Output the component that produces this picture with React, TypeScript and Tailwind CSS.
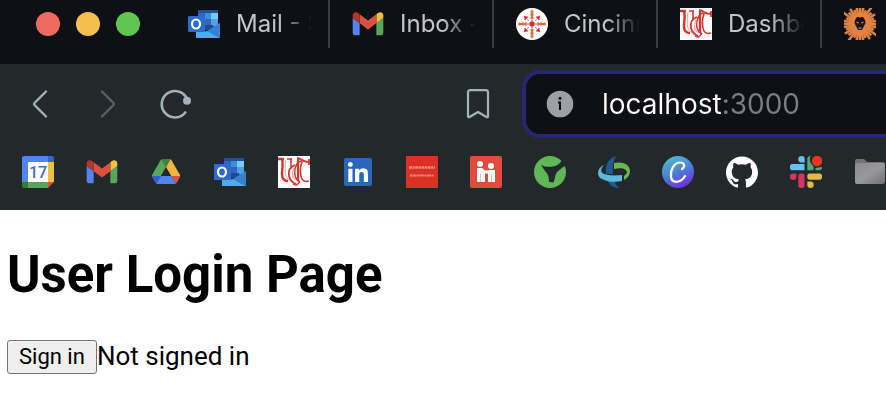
import type { ReactNode } from 'react';
import { FaLinkedin } from 'react-icons/fa';
import { SiGithub } from 'react-icons/si';

function Outlook() {
  return (
    <svg viewBox="0 0 32 32" className="size-8">
      <rect x="10" y="2" width="20" height="20" rx="1" fill="#2b69bd" />
      <path d="M11 2h18a1 1 0 0 1 1 1v2H10V3a1 1 0 0 1 1-1z" fill="#264f99" />
      <path d="M17 5h6v6h-6z" fill="#3a90dc" />
      <path d="M23 5h7v6h-7z" fill="#70ccf8" />
      <path d="M17 11h6v6h-6z" fill="#2f67bd" />
      <path d="M23 11h7v7h-7z" fill="#4ca2e4" />
      <path d="M17 17h8v5h-8z" fill="#204a93" />
      <path d="M8 24l12-1 12-8v14a1 1 0 0 1-1 1H9a1 1 0 0 1-1-1z" fill="#4faae9" />
      <path d="M32 15v14l-1 1-12-7z" fill="#3a80d0" />
      <path d="M8 24h9l14 6H9a1 1 0 0 1-1-1z" fill="#51aaea" />
      <rect y="8" width="17" height="16" rx="1" fill="#2b6bcd" />
      <ellipse cx="8" cy="16" rx="4" ry="4.5" fill="none" stroke="#fff" strokeWidth="2.200" />
    </svg>
  );
}

function Gmail() {
  return (
    <svg viewBox="50 30 92 92" className="size-8">
      <path fill="#5585ec" d="M58 108h14V74L52 59v43c0 3.300 2.700 6 6 6" />
      <path fill="#58a65c" d="M120 108h14c3.300 0 6-2.700 6-6V59l-20 15" />
      <path fill="#f1bf42" d="M120 48v26l20-15v-8c0-7.400-8.500-11.600-14.400-7.200" />
      <path fill="#d95140" d="M72 74V48l24 18 24-18v26L96 92" />
      <path fill="#b5352a" d="M52 51v8l20 15V48l-5.600-4.200C60.500 39.400 52 43.600 52 51" />
    </svg>
  );
}

const CAMPUS_ARMS = [0, 90, 180, 270];

function Campus() {
  return (
    <svg viewBox="0 0 32 32" className="size-8">
      <circle cx="16" cy="16" r="16" fill="#fff" />
      {CAMPUS_ARMS.map((angle) => (
        <g key={angle} transform={`rotate(${angle} 16 16)`}>
          <path d="M16 1l2 3.500h-4zM16 4l2.300 3.500h-4.600zM16 7l2.300 3.500h-4.600z" fill="#dd7a3f" />
          <path d="M16 3v10" stroke="#d9542f" strokeWidth="1" />
          <path d="M8 8l4 1-3 3zM10 10l3 3" fill="#dc3347" stroke="#dc3347" strokeWidth=".6" />
        </g>
      ))}
      <circle cx="16" cy="16" r="2.700" fill="#d8322f" />
    </svg>
  );
}

function Cincinnati() {
  return (
    <svg viewBox="0 0 32 32" className="size-8">
      <path fill="#fff" d="M0 0h32v32H0z" />
      <g fill="none" stroke="#d8342d">
        <path d="M0 3h6M4 3c1.500 5 0 10 0 15 0 5 2 7 6 7" strokeWidth="2.400" />
        <path d="M8 4c-1 6-1 12 0 16 1 3 3 4 5 5" strokeWidth=".8" stroke="#e88d88" />
        <path d="M9 3h5M13 3v8" strokeWidth="1.600" />
        <path d="M17 9c-5 2-7 6-6 11 1 4 4 7 7 8" strokeWidth="1.800" />
        <path d="M16 12c-2 4-2 9 1 12" strokeWidth="1" stroke="#e88d88" />
        <path d="M29 6c-7-3-11 1-12 7-1 6 1 11 5 13" strokeWidth="1.400" />
        <path d="M20 3v22" strokeWidth="2.200" />
        <path d="M24 6c-2 5-2 12 0 17 1 2 4 3 7 2" strokeWidth="1.600" />
        <path d="M19 2c4 0 6 4 12 4M31 3v6" strokeWidth="1.800" />
        <path d="M15 28c3 2 5 1 7-3" strokeWidth="1.400" />
      </g>
    </svg>
  );
}

const RAYS = Array.from({ length: 32 }, (_, i) => ({ angle: i * 11.25, tip: [0, -2, 1, -4][i % 4] }));

function Lion() {
  return (
    <svg viewBox="0 0 32 32" className="size-8">
      <g fill="#e08345">
        {RAYS.map(({ angle, tip }) => (
          <path key={angle} d={`M14.600 8L15 ${tip}h2.400L17.200 8z`} transform={`rotate(${angle} 16 16)`} />
        ))}
        <circle cx="16" cy="16" r="9.500" />
      </g>
      <path d="M11 12l2-3h2l1 1 1-1h2l2 3 .5 3-2 4-1.500 3h-4l-1.500-3-2-4z" fill="#19130f" />
      <path d="M12.500 13.500l2.500 1v1l-2.500-.5zM19.500 13.500l-2.500 1v1l2.500-.5zM14 19.500h4l-1 1.200h-2z" fill="#d97c41" />
    </svg>
  );
}

function Calendar() {
  return (
    <svg viewBox="0 0 32 32" className="size-8">
      <path d="M2 0h24v6H6v20H0V2a2 2 0 0 1 2-2z" fill="#5086ec" />
      <path d="M26 0h4a2 2 0 0 1 2 2v4h-6z" fill="#2f66d0" />
      <path d="M26 6h6v20h-6z" fill="#f1bf42" />
      <path d="M6 26h20v6H6z" fill="#58a65c" />
      <path d="M0 26h6v6H2a2 2 0 0 1-2-2z" fill="#34783c" />
      <path d="M26 26h6l-6 6z" fill="#d95140" />
      <path d="M6 6h20v20H6z" fill="#fff" />
      <text x="16" y="22" textAnchor="middle" fontSize="16" fontWeight="500" fill="#3b6fd4" className="font-['Roboto',sans-serif]">17</text>
    </svg>
  );
}

function Drive() {
  return (
    <svg viewBox="-6 -9 99 99" className="size-8">
      <path d="M6.600 66.850l3.850 6.650c.8 1.400 1.950 2.500 3.300 3.300L27.500 53H0c0 1.550.4 3.100 1.200 4.500z" fill="#2d63d0" />
      <path d="M43.650 25L29.900 1.200c-1.350.8-2.500 1.900-3.300 3.300l-25.400 44A9.060 9.060 0 0 0 0 53h27.500z" fill="#58a65c" />
      <path d="M73.550 76.800c1.350-.8 2.500-1.900 3.300-3.300L86.100 57.500c.8-1.400 1.200-2.950 1.200-4.500H59.800l5.850 11.500z" fill="#d95140" />
      <path d="M43.650 25L57.400 1.200C56.050.4 54.500 0 52.900 0H34.400c-1.600 0-3.150.45-4.500 1.200z" fill="#3c8343" />
      <path d="M59.800 53H27.500L13.750 76.800c1.350.8 2.900 1.200 4.500 1.200h50.800c1.600 0 3.150-.45 4.500-1.200z" fill="#5086ec" />
      <path d="M73.400 26.500L60.700 4.500c-.8-1.400-1.950-2.500-3.300-3.300L43.650 25l16.150 28h27.450c0-1.550-.4-3.100-1.200-4.500z" fill="#f0b541" />
    </svg>
  );
}

function LinkedIn() {
  return (
    <span className="grid size-8 place-items-center bg-[linear-gradient(#fff,#fff)] bg-[length:22px_22px] bg-center bg-no-repeat">
      <FaLinkedin className="size-8 text-[#2b66bd]" />
    </span>
  );
}

function RedSite() {
  return (
    <svg viewBox="0 0 32 32" className="size-8">
      <rect width="32" height="32" rx="1" fill="#d93225" />
      <path d="M3 11.500h26" stroke="#eb8b80" strokeWidth="2.500" strokeDasharray="3 .6 2 .6" />
      <path d="M4 19.500h24" stroke="#eb8b80" strokeWidth="2" strokeDasharray="2 .6 4 .6" />
    </svg>
  );
}

function People() {
  return (
    <svg viewBox="0 0 32 32" className="size-8">
      <rect width="32" height="32" rx="2" fill="#e24c3d" />
      <g fill="#fff">
        <circle cx="10" cy="8" r="3" />
        <circle cx="21" cy="10" r="3" />
        <path d="M7 12h5l3 2.500h3l1-.5h6v12h-7v-8.500h-3V26H7z" />
      </g>
      <path d="M10.500 18v8M21.500 18v8" stroke="#f3aaa2" strokeWidth=".8" />
    </svg>
  );
}

function GreenMark() {
  return (
    <svg viewBox="0 0 32 32" className="size-8">
      <circle cx="16" cy="16" r="16" fill="#5fb757" />
      <path d="M7 9c4 2 8 2 12 1.500 4-.5 7-3 9-6.500l4 6-3 1-6 5c-2 3-2 7-3.500 10.500L15 26c0-5-1-8-4-11z" fill="#23292b" />
    </svg>
  );
}

function Swirl() {
  return (
    <svg viewBox="0 0 32 32" className="size-8">
      <path d="M18 0C10 3 7 9 8 18h7C14 11 15 5 18 0zM10 25c2 5 6 7 11 7-2-2-4-4-4-7z" fill="#235a8c" />
      <path d="M16 7c8-2 16 1 16 8 0 4-2 7-6 9v-4l3-3c0-4-5-6-13-4z" fill="#6cb650" />
      <path d="M6 9C-1 12-2 20 4 23c6 3 13 3.500 20 2v-6c-8 1-15 .5-19-1.500-3-2-2-5 1-8.500z" fill="#5cbbd8" />
    </svg>
  );
}

function Canva() {
  return (
    <svg viewBox="0 0 32 32" className="size-8">
      <defs>
        <linearGradient id="canva" x1=".25" y1="0" x2=".7" y2="1">
          <stop stopColor="#50bccb" />
          <stop offset=".5" stopColor="#4a80d4" />
          <stop offset="1" stopColor="#7228e5" />
        </linearGradient>
      </defs>
      <circle cx="16" cy="16" r="16" fill="url(#canva)" />
      <path d="M20 13c4-3 2-6.500-2-6.500-6 0-10 8-9 14.500 1 7 10 6 14-1" fill="none" stroke="#fff" strokeWidth="2.200" strokeLinecap="round" />
    </svg>
  );
}

function Slack() {
  return (
    <svg viewBox="0 0 32 32" className="size-8">
      <path d="M11.500 0a3.200 3.200 0 0 1 3.200 3.200v3.200h-3.200a3.200 3.200 0 0 1 0-6.400zM1.500 8h13v6.200h-13L0 12.700V9.500z" fill="#62c4ee" />
      <path d="M20.500 0h-.7a3 3 0 0 0-2.500 3.200v11h6.200v-4a9 9 0 0 1-3-10.200zM25.500 14.200V12l6.500-1a3 3 0 0 1-3 3.200z" fill="#58a67c" />
      <path d="M20.500 32a3.200 3.200 0 0 1-3.200-3.200v-3.200h3.200a3.200 3.200 0 0 1 0 6.400zM18.800 17.500h11.700L32 19v3.200l-1.500 1.500H18.800l-1.500-1.500V19z" fill="#e7b548" />
      <path d="M0 20.700a3.200 3.200 0 0 1 3.200-3.200h3.200v3.200a3.200 3.200 0 0 1-6.400 0zM8.300 19l1.500-1.500H13l1.500 1.500v11.500L13 32H9.800l-1.500-1.500z" fill="#d33660" />
      <circle cx="27" cy="5" r="5.200" fill="#ea3323" />
    </svg>
  );
}

function Folder() {
  return (
    <svg viewBox="0 0 32 32" className="size-8">
      <defs>
        <linearGradient id="folder" x2="1" y2="1">
          <stop stopColor="#8b8b8f" />
          <stop offset=".5" stopColor="#98989d" />
          <stop offset="1" stopColor="#707074" />
        </linearGradient>
      </defs>
      <path d="M1 5a2 2 0 0 1 2-2h6c3 0 2 3 5 3h15a2 2 0 0 1 2 2v6H1z" fill="#727276" />
      <rect x="1" y="7" width="30" height="21" rx="2" fill="url(#folder)" />
    </svg>
  );
}

const tabs: { title: string; icon: ReactNode }[] = [
  { title: 'Mail - S', icon: <Outlook /> },
  { title: 'Inbox - ', icon: <Gmail /> },
  { title: 'Cincinnati', icon: <Campus /> },
  { title: 'Dashboard', icon: <Cincinnati /> },
  { title: '', icon: <Lion /> },
];

const bookmarks: { label: string; icon: ReactNode }[] = [
  { label: 'Calendar', icon: <Calendar /> },
  { label: 'Gmail', icon: <Gmail /> },
  { label: 'Drive', icon: <Drive /> },
  { label: 'Outlook', icon: <Outlook /> },
  { label: 'Cincinnati', icon: <Cincinnati /> },
  { label: 'LinkedIn', icon: <LinkedIn /> },
  { label: 'News', icon: <RedSite /> },
  { label: 'People', icon: <People /> },
  { label: 'Green', icon: <GreenMark /> },
  { label: 'Swirl', icon: <Swirl /> },
  { label: 'Canva', icon: <Canva /> },
  { label: 'GitHub', icon: <SiGithub className="size-8 text-white" /> },
  { label: 'Slack', icon: <Slack /> },
  { label: 'Folder', icon: <Folder /> },
];

function TabStrip() {
  return (
    <header className="flex overflow-hidden bg-[#0f1015] pb-4">
      <div className="flex h-12 w-[166px] shrink-0 items-center gap-4 pl-9">
        <button aria-label="Close" className="size-6 rounded-full bg-[#ec6a5e]" />
        <button aria-label="Minimize" className="size-6 rounded-full bg-[#f4bf4f]" />
        <button aria-label="Zoom" className="size-6 rounded-full bg-[#61c554]" />
      </div>
      <nav className="flex" aria-label="Tabs">
        {tabs.map((tab, i) => (
          <button
            key={i}
            aria-label={tab.title || 'Lion'}
            className="flex h-12 w-[164px] shrink-0 items-center gap-4 border-r-2 border-[#3c3d40] pr-4 pl-[22px] text-left"
          >
            <span className="shrink-0">{tab.icon}</span>
            <span className="min-w-0 flex-1 overflow-hidden text-2xl whitespace-pre text-[#c4c5c8] [mask-image:linear-gradient(to_right,#000_56%,transparent)]">
              {tab.title}
            </span>
          </button>
        ))}
      </nav>
    </header>
  );
}

function Toolbar() {
  return (
    <div className="flex h-20 items-center pl-6 text-[#a5b2ba]">
      <div className="flex shrink-0 gap-9">
        <button aria-label="Back">
          <svg viewBox="0 0 32 32" className="size-8" fill="none" stroke="currentColor" strokeWidth="2.400" strokeLinecap="round" strokeLinejoin="round">
            <path d="M22 3.500L10.500 15q-1 1 0 2L22 28.500" />
          </svg>
        </button>
        <button aria-label="Forward" className="text-[#596065]">
          <svg viewBox="0 0 32 32" className="size-8" fill="none" stroke="currentColor" strokeWidth="2.400" strokeLinecap="round" strokeLinejoin="round">
            <path d="M10 3.500L21.500 15q1 1 0 2L10 28.500" />
          </svg>
        </button>
        <button aria-label="Reload">
          <svg viewBox="0 0 32 32" className="size-8" fill="none" stroke="currentColor" strokeWidth="2.600" strokeLinecap="round">
            <path d="M27.300 11.500A13.200 13.200 0 1 0 25.300 24.500" />
            <circle cx="27" cy="12.700" r="4" fill="currentColor" stroke="none" />
          </svg>
        </button>
      </div>
      <button aria-label="Bookmark this page" className="ml-[270px] shrink-0">
        <svg viewBox="0 0 32 32" className="size-8" fill="none" stroke="currentColor" strokeWidth="2.200" strokeLinejoin="round">
          <path d="M8 2.200h16a2 2 0 0 1 2 2v24c0 1-.7 1.300-1.500.8L16 24l-8.500 5c-.8.5-1.500.2-1.500-.8v-24a2 2 0 0 1 2-2z" />
        </svg>
      </button>
      <div className="-mr-6 ml-7 flex h-[68px] min-w-0 flex-1 items-center gap-7 rounded-[18px] border-4 border-[#28266f] bg-[#0f1015] pl-5">
        <svg viewBox="0 0 28 28" className="size-7 shrink-0" aria-hidden="true">
          <circle cx="14" cy="14" r="13.300" fill="#9aa0a4" />
          <circle cx="14" cy="8.300" r="1.500" fill="#0f1015" />
          <path d="M12 12.500h2v7.500" fill="none" stroke="#0f1015" strokeWidth="2" />
        </svg>
        <input
          aria-label="Address"
          defaultValue="localhost:3000"
          className="min-w-0 flex-1 bg-[linear-gradient(to_right,#fff_119px,#7c7d80_119px)] bg-clip-text text-[28px] text-transparent outline-none"
        />
      </div>
    </div>
  );
}

export default function App() {
  return (
    <div className="overflow-hidden bg-white text-black">
      <div className="font-['Inter',sans-serif]">
        <TabStrip />
        <div className="bg-[#23292b]">
          <Toolbar />
          <nav aria-label="Bookmarks" className="flex gap-8 overflow-hidden pt-3 pb-[22px] pl-[22px]">
            {bookmarks.map((item) => (
              <a key={item.label} href="#" aria-label={item.label} className="shrink-0">
                {item.icon}
              </a>
            ))}
          </nav>
        </div>
      </div>
      <main className="px-[7px] pt-8 pb-9 font-['Roboto',sans-serif]">
        <h1 className="text-[51px] leading-[66px] font-bold">User Login Page</h1>
        <div className="flex items-start pt-8">
          <button className="h-[34px] rounded-[3px] border border-[#767676] bg-[#efefef] px-[11px] text-[22px] leading-8">Sign in</button>
          <span className="text-[26px] leading-8">Not signed in</span>
        </div>
      </main>
    </div>
  );
}
